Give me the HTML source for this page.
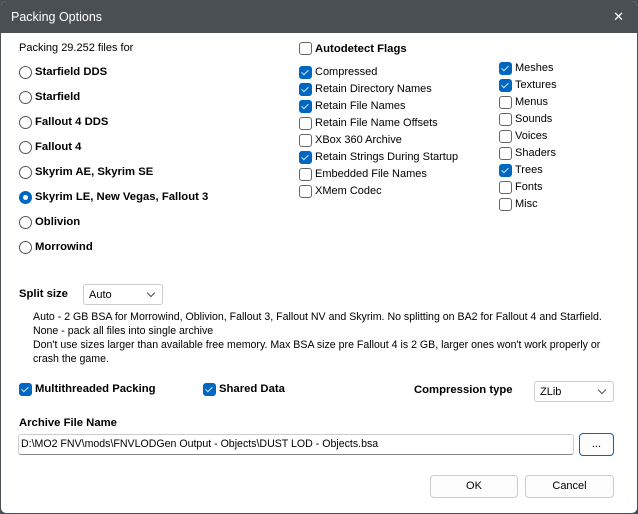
<!DOCTYPE html>
<html><head><style>
*{box-sizing:border-box}
body{margin:0;width:638px;height:514px;overflow:hidden;background:#4a4f54;font-family:"Liberation Sans",sans-serif;font-size:11px;color:#000}
.win{position:absolute;left:0;top:0;width:638px;height:514px;border:1px solid #4a4f54;border-radius:6px;overflow:hidden;background:#fff}
.title{position:absolute;left:0;top:0;width:100%;height:32px;background:#4a4f54;color:#fff;font-size:12.5px;padding:9px 0 0 10px}
.x{position:absolute;right:13px;top:8px;color:#fff;font-size:13px;font-weight:100}
.a{position:absolute;white-space:nowrap}
.b{font-weight:bold;font-size:11.3px}
.r{position:absolute;width:13px;height:13px;border:1px solid #555;border-radius:50%;background:#fff}
.r.on{border:4px solid #0067c0}
.c{position:absolute;width:13px;height:13px;border:1px solid #666;border-radius:3px;background:#fff}
.c.on{background:#0067c0;border-color:#0067c0}
.c.on::after{content:"";position:absolute;left:3px;top:1px;width:3px;height:6px;border:solid #cfe3f7;border-width:0 1px 1px 0;transform:rotate(45deg)}
.sel{position:absolute;border:1px solid #ccc;border-radius:3px;background:#fff;padding:4px 5px;font-size:11px}
.sel::after{content:"";position:absolute;right:8px;top:5px;width:5px;height:5px;border:solid #555;border-width:0 1px 1px 0;transform:rotate(45deg)}
.btn{position:absolute;border:1px solid #ccc;border-radius:4px;background:#fdfdfd;text-align:center;font-size:11px}
</style></head><body><div class="win">
<div class="title">Packing Options<span class="x">✕</span></div>
<div class="a" style="left:18px;top:41px">Packing 29.252 files for</div>
<div class="r" style="left:18px;top:65px"></div><div class="a b" style="left:34px;top:65px">Starfield DDS</div>
<div class="r" style="left:18px;top:90px"></div><div class="a b" style="left:34px;top:90px">Starfield</div>
<div class="r" style="left:18px;top:115px"></div><div class="a b" style="left:34px;top:115px">Fallout 4 DDS</div>
<div class="r" style="left:18px;top:140px"></div><div class="a b" style="left:34px;top:140px">Fallout 4</div>
<div class="r" style="left:18px;top:165px"></div><div class="a b" style="left:34px;top:165px">Skyrim AE, Skyrim SE</div>
<div class="r on" style="left:18px;top:190px"></div><div class="a b" style="left:34px;top:190px">Skyrim LE, New Vegas, Fallout 3</div>
<div class="r" style="left:18px;top:215px"></div><div class="a b" style="left:34px;top:215px">Oblivion</div>
<div class="r" style="left:18px;top:240px"></div><div class="a b" style="left:34px;top:240px">Morrowind</div>

<div class="c" style="left:298px;top:41px"></div><div class="a b" style="left:314px;top:42px">Autodetect Flags</div>
<div class="c on" style="left:298px;top:65px"></div><div class="a" style="left:314px;top:65px">Compressed</div>
<div class="c on" style="left:298px;top:82px"></div><div class="a" style="left:314px;top:82px">Retain Directory Names</div>
<div class="c on" style="left:298px;top:99px"></div><div class="a" style="left:314px;top:99px">Retain File Names</div>
<div class="c" style="left:298px;top:116px"></div><div class="a" style="left:314px;top:116px">Retain File Name Offsets</div>
<div class="c" style="left:298px;top:133px"></div><div class="a" style="left:314px;top:133px">XBox 360 Archive</div>
<div class="c on" style="left:298px;top:150px"></div><div class="a" style="left:314px;top:150px">Retain Strings During Startup</div>
<div class="c" style="left:298px;top:167px"></div><div class="a" style="left:314px;top:167px">Embedded File Names</div>
<div class="c" style="left:298px;top:184px"></div><div class="a" style="left:314px;top:184px">XMem Codec</div>

<div class="c on" style="left:498px;top:61px"></div><div class="a" style="left:514px;top:61px">Meshes</div>
<div class="c on" style="left:498px;top:78px"></div><div class="a" style="left:514px;top:78px">Textures</div>
<div class="c" style="left:498px;top:95px"></div><div class="a" style="left:514px;top:95px">Menus</div>
<div class="c" style="left:498px;top:112px"></div><div class="a" style="left:514px;top:112px">Sounds</div>
<div class="c" style="left:498px;top:129px"></div><div class="a" style="left:514px;top:129px">Voices</div>
<div class="c" style="left:498px;top:146px"></div><div class="a" style="left:514px;top:146px">Shaders</div>
<div class="c on" style="left:498px;top:163px"></div><div class="a" style="left:514px;top:163px">Trees</div>
<div class="c" style="left:498px;top:180px"></div><div class="a" style="left:514px;top:180px">Fonts</div>
<div class="c" style="left:498px;top:197px"></div><div class="a" style="left:514px;top:197px">Misc</div>

<div class="a b" style="left:18px;top:287px">Split size</div>
<div class="sel" style="left:82px;top:283px;width:80px;height:21px">Auto</div>
<div class="a" style="left:32px;top:309px;font-size:10.6px;line-height:14px">Auto - 2 GB BSA for Morrowind, Oblivion, Fallout 3, Fallout NV and Skyrim. No splitting on BA2 for Fallout 4 and Starfield.<br>None - pack all files into single archive<br>Don't use sizes larger than available free memory. Max BSA size pre Fallout 4 is 2 GB, larger ones won't work properly or<br>crash the game.</div>

<div class="c on" style="left:18px;top:382px"></div><div class="a b" style="left:34px;top:382px">Multithreaded Packing</div>
<div class="c on" style="left:202px;top:382px"></div><div class="a b" style="left:218px;top:382px">Shared Data</div>
<div class="a b" style="left:413px;top:383px">Compression type</div>
<div class="sel" style="left:533px;top:380px;width:80px;height:21px">ZLib</div>
<div class="a b" style="left:18px;top:416px">Archive File Name</div>
<div class="a" style="left:17px;top:433px;width:556px;height:21px;border:1px solid #ccc;border-bottom-color:#888;border-radius:3px;padding:3px 2px;font-size:10.6px">D:\MO2 FNV\mods\FNVLODGen Output - Objects\DUST LOD - Objects.bsa</div>
<div class="btn" style="left:578px;top:432px;width:35px;height:23px;border-color:#0067c0;line-height:20px">...</div>
<div class="btn" style="left:429px;top:474px;width:88px;height:23px;line-height:21px">OK</div>
<div class="btn" style="left:524px;top:474px;width:89px;height:23px;line-height:21px">Cancel</div>
</div></body></html>
